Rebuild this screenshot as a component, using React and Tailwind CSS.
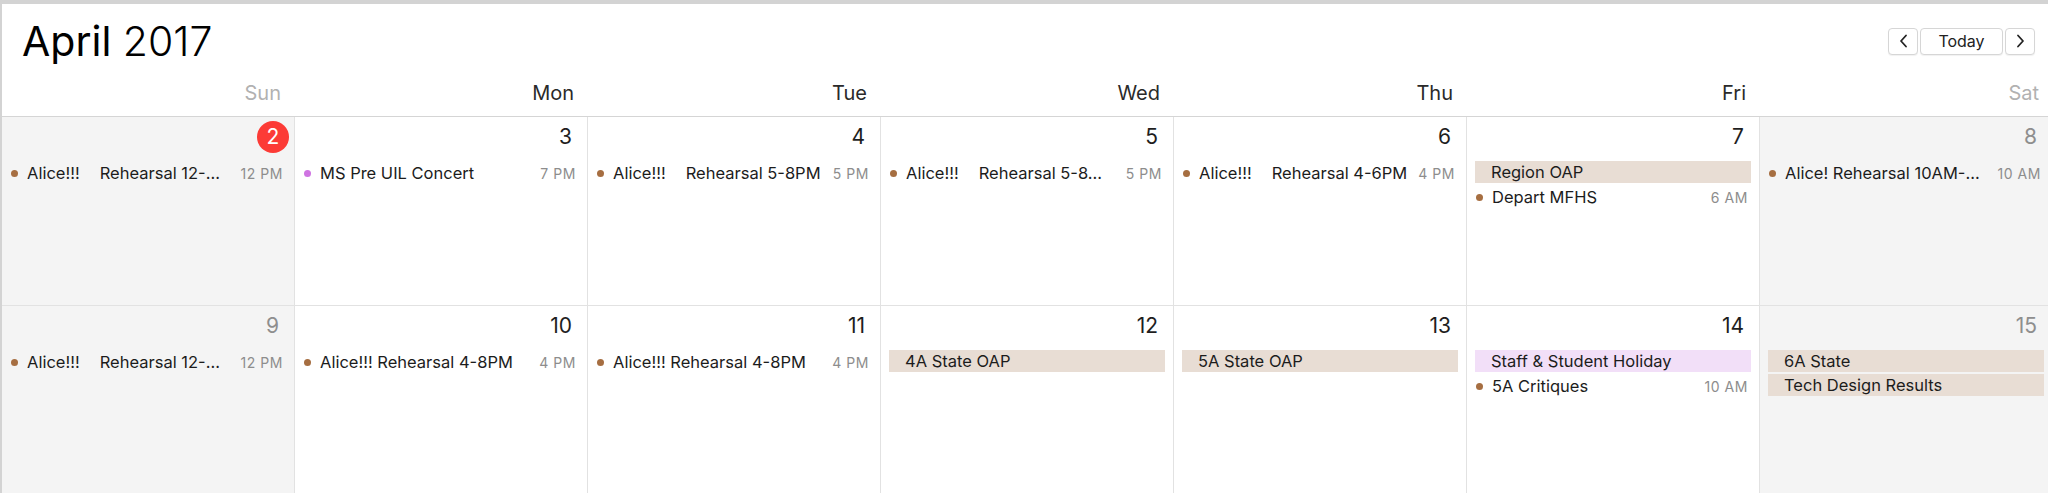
import React from "react";

const brown = "bg-[#a66e41]";
const purple = "bg-[#cf74e2]";

const weeks = [
  [
    { day: 2, weekend: true, today: true, events: [{ a: "Alice!!!", b: "Rehearsal 12-…", time: "12 PM", dot: brown }] },
    { day: 3, events: [{ b: "MS Pre UIL Concert", time: "7 PM", dot: purple }] },
    { day: 4, events: [{ a: "Alice!!!", b: "Rehearsal 5-8PM", time: "5 PM", dot: brown }] },
    { day: 5, events: [{ a: "Alice!!!", b: "Rehearsal 5-8…", time: "5 PM", dot: brown }] },
    { day: 6, events: [{ a: "Alice!!!", b: "Rehearsal 4-6PM", time: "4 PM", dot: brown }] },
    {
      day: 7,
      events: [
        { allDay: "Region OAP", tone: "beige" },
        { b: "Depart MFHS", time: "6 AM", dot: brown },
      ],
    },
    { day: 8, weekend: true, events: [{ b: "Alice! Rehearsal 10AM-…", time: "10 AM", dot: brown }] },
  ],
  [
    { day: 9, weekend: true, events: [{ a: "Alice!!!", b: "Rehearsal 12-…", time: "12 PM", dot: brown }] },
    { day: 10, events: [{ b: "Alice!!! Rehearsal 4-8PM", time: "4 PM", dot: brown }] },
    { day: 11, events: [{ b: "Alice!!! Rehearsal 4-8PM", time: "4 PM", dot: brown }] },
    { day: 12, events: [{ allDay: "4A State OAP", tone: "beige" }] },
    { day: 13, events: [{ allDay: "5A State OAP", tone: "beige" }] },
    {
      day: 14,
      events: [
        { allDay: "Staff & Student Holiday", tone: "lilac" },
        { b: "5A Critiques", time: "10 AM", dot: brown },
      ],
    },
    {
      day: 15,
      weekend: true,
      events: [
        { allDay: "6A State", tone: "beige" },
        { allDay: "Tech Design Results", tone: "beige" },
      ],
    },
  ],
];

const dayNames = ["Sun", "Mon", "Tue", "Wed", "Thu", "Fri", "Sat"];

const Chevron = ({ left }) => (
  <svg width="9" height="14" viewBox="0 0 9 14" fill="none">
    <path
      d={left ? "M7 1.5 L2 7 L7 12.5" : "M2 1.5 L7 7 L2 12.5"}
      stroke="#222"
      strokeWidth="1.8"
      strokeLinecap="round"
      strokeLinejoin="round"
    />
  </svg>
);

const Event = ({ ev }) => {
  if (ev.allDay) {
    return (
      <div
        className={`h-[22px] flex items-center pl-[16px] text-[16.5px] text-[#1c1c1c] truncate ${
          ev.tone === "lilac" ? "bg-[#f2dff8]" : "bg-[#e8ddd4]"
        }`}
      >
        {ev.allDay}
      </div>
    );
  }
  return (
    <div className="h-[24px] flex items-center pl-[1px] pr-[3px]">
      <span className={`w-[7px] h-[7px] rounded-full shrink-0 ${ev.dot}`} />
      <span className="ml-[9px] flex-1 min-w-0 truncate text-[16.5px] text-[#1c1c1c]">
        {ev.a && <span className="pr-[20px]">{ev.a}</span>}
        {ev.b}
      </span>
      <span className="ml-[8px] shrink-0 text-[14px] tracking-[0.04em] text-[#8d8d8d]">{ev.time}</span>
    </div>
  );
};

const DayCell = ({ cell }) => (
  <div
    className={`border-r border-b border-[#e2e2e2] flex flex-col ${cell.weekend ? "bg-[#f4f4f4]" : "bg-white"}`}
  >
    <div className="h-[32px] mt-[4px] flex justify-end pr-[5px]">
      {cell.today ? (
        <span className="w-[32px] h-[32px] rounded-full bg-[#fc3b36] text-white text-[21px] flex items-center justify-center">
          {cell.day}
        </span>
      ) : (
        <span
          className={`h-[32px] flex items-center pr-[10px] text-[21px] ${
            cell.weekend ? "text-[#8e8e8e]" : "text-[#1e1e1e]"
          }`}
        >
          {cell.day}
        </span>
      )}
    </div>
    <div className="mt-[8px] px-[8px] flex flex-col gap-[2px]">
      {cell.events.map((ev, i) => (
        <Event key={i} ev={ev} />
      ))}
    </div>
  </div>
);

export default function App() {
  return (
    <div
      className="w-[2048px] h-[493px] overflow-hidden bg-white border-t-4 border-l-2 border-[#d3d3d3]"
      style={{ fontFamily: "Inter, Roboto, 'Noto Sans', sans-serif" }}
    >
      {/* title row */}
      <div className="flex items-center justify-between pt-[13px] pl-[20px] pr-[13px]">
        <h1 className="h-[48px] leading-[48px] text-[41px] text-black">
          April <span className="font-light">2017</span>
        </h1>
        <div className="flex items-center gap-[2px]">
          <button className="w-[30px] h-[27px] flex items-center justify-center rounded-[4px] border border-[#d6d6d6] bg-white shadow-[0_1px_1px_rgba(0,0,0,0.06)]">
            <Chevron left />
          </button>
          <button className="w-[83px] h-[27px] rounded-[4px] border border-[#d6d6d6] bg-white text-[16px] text-[#222] shadow-[0_1px_1px_rgba(0,0,0,0.06)]">
            Today
          </button>
          <button className="w-[30px] h-[27px] flex items-center justify-center rounded-[4px] border border-[#d6d6d6] bg-white shadow-[0_1px_1px_rgba(0,0,0,0.06)]">
            <Chevron />
          </button>
        </div>
      </div>

      {/* weekday names */}
      <div className="mt-[16px] grid grid-cols-[repeat(7,293px)] pb-[11px] border-b border-[#d5d5d5]">
        {dayNames.map((d, i) => (
          <div
            key={d}
            className={`h-[24px] leading-[24px] text-right pr-[14px] text-[20px] ${
              i === 0 || i === 6 ? "text-[#b1b1b1]" : "text-[#2a2a2a]"
            }`}
          >
            {d}
          </div>
        ))}
      </div>

      {/* month grid */}
      <div className="grid grid-cols-[repeat(7,293px)] grid-rows-[189px_189px]">
        {weeks.flat().map((cell) => (
          <DayCell key={cell.day} cell={cell} />
        ))}
      </div>
    </div>
  );
}
